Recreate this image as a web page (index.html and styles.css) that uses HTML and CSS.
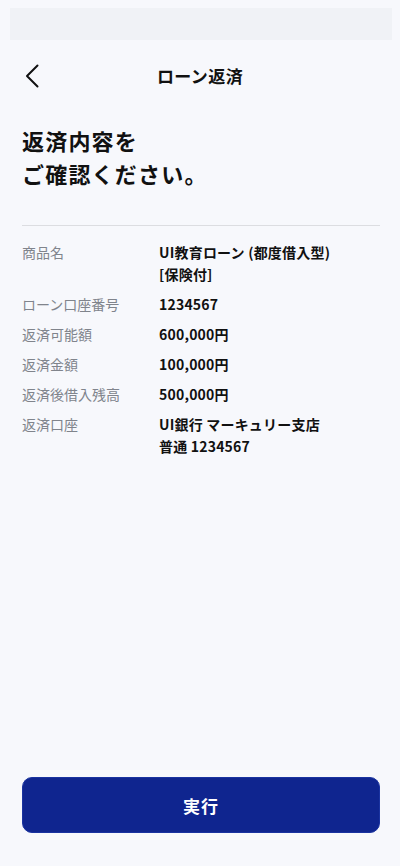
FILE: index.html
```html
<!DOCTYPE html>
<html lang="ja">
<head>
	<meta charset="UTF-8">
	<title>ローン返済</title>
	<link rel="stylesheet" href="styles.css">
</head>
<body>
<div class="page">
	<div class="status"></div>

	<!-- ヘッダー -->
	<div class="nav">
		<a class="back" href="javascript:;">
			<svg width="14" height="24" viewBox="0 0 14 24">
				<path d="M12.5 1.5 L2 12 L12.5 22.5" fill="none" stroke="#111" stroke-width="2" stroke-linecap="round" stroke-linejoin="round"/>
			</svg>
		</a>
		<div class="nav-title">ローン返済</div>
	</div>

	<h1 class="heading">返済内容を<br>ご確認ください。</h1>

	<div class="divider"></div>

	<!-- 返済内容 -->
	<dl class="detail">
		<div class="row">
			<dt>商品名</dt>
			<dd>UI教育ローン (都度借入型)<br>[保険付]</dd>
		</div>
		<div class="row">
			<dt>ローン口座番号</dt>
			<dd>1234567</dd>
		</div>
		<div class="row">
			<dt>返済可能額</dt>
			<dd>600,000円</dd>
		</div>
		<div class="row">
			<dt>返済金額</dt>
			<dd>100,000円</dd>
		</div>
		<div class="row">
			<dt>返済後借入残高</dt>
			<dd>500,000円</dd>
		</div>
		<div class="row">
			<dt>返済口座</dt>
			<dd>UI銀行 マーキュリー支店<br>普通 1234567</dd>
		</div>
	</dl>

	<div class="spacer"></div>

	<button class="submit" type="button">実行</button>
</div>
</body>
</html>
```
FILE: styles.css
```css
* {
    margin: 0;
    padding: 0;
    box-sizing: border-box;
}

body {
    background-color: #f7f8fc;
    font-family: "Noto Sans CJK JP", "Noto Sans", sans-serif;
    color: #111;
}

.page {
    height: 866px;
    display: flex;
    flex-direction: column;
}

/* 上部のステータス帯 */
.status {
    height: 32px;
    margin: 8px 8px 0 10px;
    background-color: #f0f2f6;
}

.nav {
    position: relative;
    height: 72px;
    display: flex;
    align-items: center;
    justify-content: center;
}

.back {
    position: absolute;
    left: 25px;
    top: 24px;
    display: block;
    width: 14px;
    height: 24px;
}

.nav-title {
    font-size: 17px;
    font-weight: 700;
    letter-spacing: 0.4px;
    margin-top: -2px;
}

.heading {
    margin: 12px 22px 0;
    font-size: 22px;
    line-height: 33px;
    font-weight: 700;
    letter-spacing: 1.2px;
}

.divider {
    height: 1px;
    margin: 35px 20px 0 22px;
    background-color: #dcdde1;
}

.detail {
    margin: 15px 22px 0;
    display: flex;
    flex-direction: column;
    gap: 8px;
    font-size: 14px;
    line-height: 22px;
}

.row {
    display: flex;
}

.row dt {
    width: 137px;
    flex-shrink: 0;
    color: #80848c;
}

.row dd {
    font-weight: 700;
    color: #111;
    letter-spacing: 0.2px;
}

.spacer {
    flex: 1;
}

.submit {
    margin: 0 20px 33px 22px;
    height: 56px;
    border: 1px solid #1a33a0;
    border-radius: 10px;
    background-color: #0f258f;
    color: #fff;
    font-family: inherit;
    font-size: 17px;
    font-weight: 700;
    letter-spacing: 1px;
}
```
